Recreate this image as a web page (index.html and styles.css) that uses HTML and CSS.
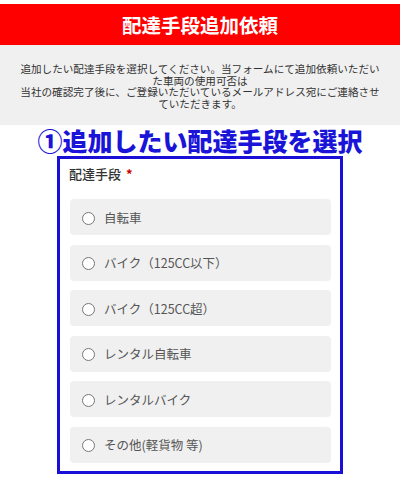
FILE: index.html
```html
<!DOCTYPE html>
<html lang="ja">
<head>
  <meta charset="UTF-8" />
  <meta name="viewport" content="width=device-width, initial-scale=1.0"/>
  <title>配達手段追加依頼</title>
  <link rel="stylesheet" href="styles.css">
</head>
<body>
  <h1 class="titulo">配達手段追加依頼</h1>

  <div class="descricao">
    追加したい配達手段を選択してください。当フォームにて追加依頼いただいた車両の使用可否は<br>
    当社の確認完了後に、ご登録いただいているメールアドレス宛にご連絡させていただきます。
  </div>

  <h2 class="passo">①追加したい配達手段を選択</h2>

  <div class="caixa">
    <div class="rotulo">配達手段 <span class="obrigatorio">*</span></div>
    <label class="opcao"><input type="radio" name="meio"><span>自転車</span></label>
    <label class="opcao"><input type="radio" name="meio"><span>バイク（125CC以下）</span></label>
    <label class="opcao"><input type="radio" name="meio"><span>バイク（125CC超）</span></label>
    <label class="opcao"><input type="radio" name="meio"><span>レンタル自転車</span></label>
    <label class="opcao"><input type="radio" name="meio"><span>レンタルバイク</span></label>
    <label class="opcao"><input type="radio" name="meio"><span>その他(軽貨物 等)</span></label>
  </div>
</body>
</html>
```

FILE: styles.css
```css
body {
  font-family: "Noto Sans CJK JP", sans-serif;
  background: #fff;
  margin: 0;
  padding-top: 4px;
}
.titulo {
  margin: 0;
  height: 41px;
  line-height: 41px;
  background: #ff0000;
  color: #fff;
  text-align: center;
  font-size: 19.5px;
  font-weight: bold;
}
.descricao {
  background: #f0f0f0;
  color: #333;
  font-size: 10.6px;
  line-height: 11.5px;
  text-align: center;
  padding: 18px 17px 16px;
  height: 46px;
}
.passo {
  margin: 0;
  text-align: center;
  color: #1a14d8;
  font-size: 25px;
  font-weight: 900;
  line-height: 31px;
}
.caixa {
  width: 261px;
  margin: 0 auto;
  border: 3px solid #1a0fd6;
  padding: 6px 9px 8px 10px;
}
.rotulo {
  font-size: 13px;
  color: #333;
  font-weight: 500;
  line-height: 18px;
  margin-left: -1px;
  margin-bottom: 16px;
}
.obrigatorio {
  color: #cc0000;
  font-weight: bold;
  margin-left: 2px;
}
.opcao {
  display: flex;
  align-items: center;
  height: 36px;
  background: #f0f0f0;
  border-radius: 4px;
  margin-bottom: 9.6px;
  font-size: 12.5px;
  color: #555;
  padding-left: 12px;
}
.opcao:last-child {
  margin-bottom: 0;
}
.opcao input {
  appearance: none;
  width: 13px;
  height: 13px;
  border: 1px solid #777;
  border-radius: 50%;
  background: #fff;
  margin: 2px 9px 0 0;
}
```
